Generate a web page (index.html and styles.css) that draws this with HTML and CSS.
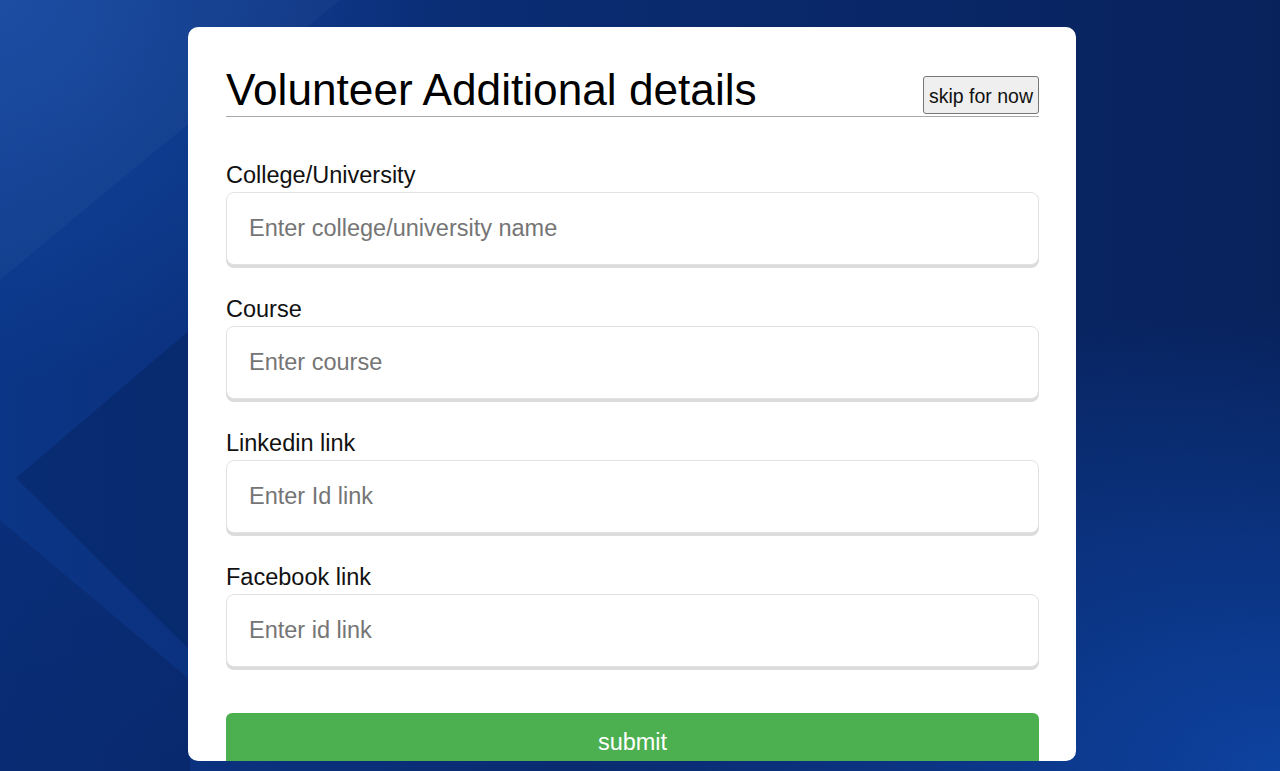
FILE: index.html
```html
<!DOCTYPE html>
<html lang="en">
<head>
<meta charset="utf-8">
<title>Volunteer Additional details</title>
<link rel="stylesheet" href="styles.css">
</head>
<body>
<div class="bg-shape shape-a"></div>
<div class="bg-shape shape-b"></div>
<div class="bg-shape shape-c"></div>
<main class="page">
  <form class="card">
    <div class="card-head">
      <h1 class="title">Volunteer Additional details</h1>
      <button type="button" class="skip">skip for now</button>
    </div>
    <div class="fields">
      <div class="field">
        <label class="label" for="college">College/University</label>
        <input class="input" id="college" type="text" placeholder="Enter college/university name">
      </div>
      <div class="field">
        <label class="label" for="course">Course</label>
        <input class="input" id="course" type="text" placeholder="Enter course">
      </div>
      <div class="field">
        <label class="label" for="linkedin">Linkedin link</label>
        <input class="input" id="linkedin" type="text" placeholder="Enter Id link">
      </div>
      <div class="field">
        <label class="label" for="facebook">Facebook link</label>
        <input class="input" id="facebook" type="text" placeholder="Enter id link">
      </div>
    </div>
    <button type="submit" class="submit">submit</button>
  </form>
</main>
</body>
</html>
```

FILE: styles.css
```css
html, body {
  margin: 0;
  padding: 0;
  height: 100%;
}

body {
  position: relative;
  overflow: hidden;
  font-family: "Liberation Sans", Arial, sans-serif;
  background:
    radial-gradient(ellipse 55% 60% at 100% 100%, rgba(14, 70, 168, 0.9) 0%, rgba(14, 70, 168, 0) 100%),
    radial-gradient(ellipse 35% 50% at 0% 0%, rgba(22, 76, 168, 0.75) 0%, rgba(22, 76, 168, 0) 100%),
    linear-gradient(to right, #0b3586 0%, #0a2b70 45%, #08225c 100%);
}

.bg-shape {
  position: absolute;
  pointer-events: none;
}

.shape-a {
  left: 0;
  top: 0;
  width: 420px;
  height: 771px;
  background: linear-gradient(135deg, rgba(255, 255, 255, 0.04), rgba(255, 255, 255, 0));
  clip-path: polygon(0 0, 340px 0, 120px 180px, 0 280px);
}

.shape-b {
  left: 0;
  top: 0;
  width: 260px;
  height: 771px;
  background: rgba(4, 20, 70, 0.28);
  clip-path: polygon(16px 478px, 190px 330px, 190px 650px);
}

.shape-c {
  left: 0;
  top: 0;
  width: 260px;
  height: 771px;
  background: linear-gradient(to bottom, rgba(4, 20, 70, 0) 0%, rgba(4, 20, 70, 0.3) 100%);
  clip-path: polygon(0 520px, 190px 680px, 190px 771px, 0 771px);
}

.page {
  position: relative;
  display: flex;
  justify-content: flex-start;
  padding: 27px 0 0 188px;
  box-sizing: border-box;
  height: 100%;
}

.card {
  width: 888px;
  height: 734px;
  box-sizing: border-box;
  background: #fff;
  border-radius: 10px;
  padding: 38px 37px 0 38px;
  overflow: hidden;
  display: flex;
  flex-direction: column;
}

.card-head {
  display: flex;
  justify-content: space-between;
  align-items: flex-end;
  border-bottom: 1px solid #a9a9a9;
  padding-bottom: 1px;
}

.title {
  margin: 0;
  font-size: 44.2px;
  font-weight: 400;
  line-height: 50px;
  color: #000;
}

.skip {
  font-family: "Liberation Sans", Arial, sans-serif;
  font-size: 19.5px;
  color: #111;
  background: #efefef;
  border: 1px solid #767676;
  border-radius: 3px;
  padding: 7px 5px 6px;
  height: 38px;
  margin-bottom: 1px;
  line-height: 22px;
}

.fields {
  display: flex;
  flex-direction: column;
  gap: 31px;
  margin-top: 45px;
}

.field {
  display: flex;
  flex-direction: column;
  gap: 3px;
}

.label {
  font-size: 23.5px;
  line-height: 27px;
  color: #111;
}

.input {
  height: 73px;
  box-sizing: border-box;
  border: 1px solid #e2e2e2;
  border-radius: 8px;
  box-shadow: 0 3px 0 #dcdcdc;
  padding: 0 22px;
  font-family: "Liberation Sans", Arial, sans-serif;
  font-size: 23.5px;
  color: #222;
  background: #fff;
  outline: none;
}

.input::placeholder {
  color: #757575;
}

.submit {
  margin-top: 46px;
  flex: none;
  height: 60px;
  border: none;
  border-radius: 6px;
  background: #4caf50;
  color: #fff;
  font-family: "Liberation Sans", Arial, sans-serif;
  font-size: 23.5px;
  display: flex;
  align-items: flex-start;
  justify-content: center;
  padding: 16px 0 0;
}
```
